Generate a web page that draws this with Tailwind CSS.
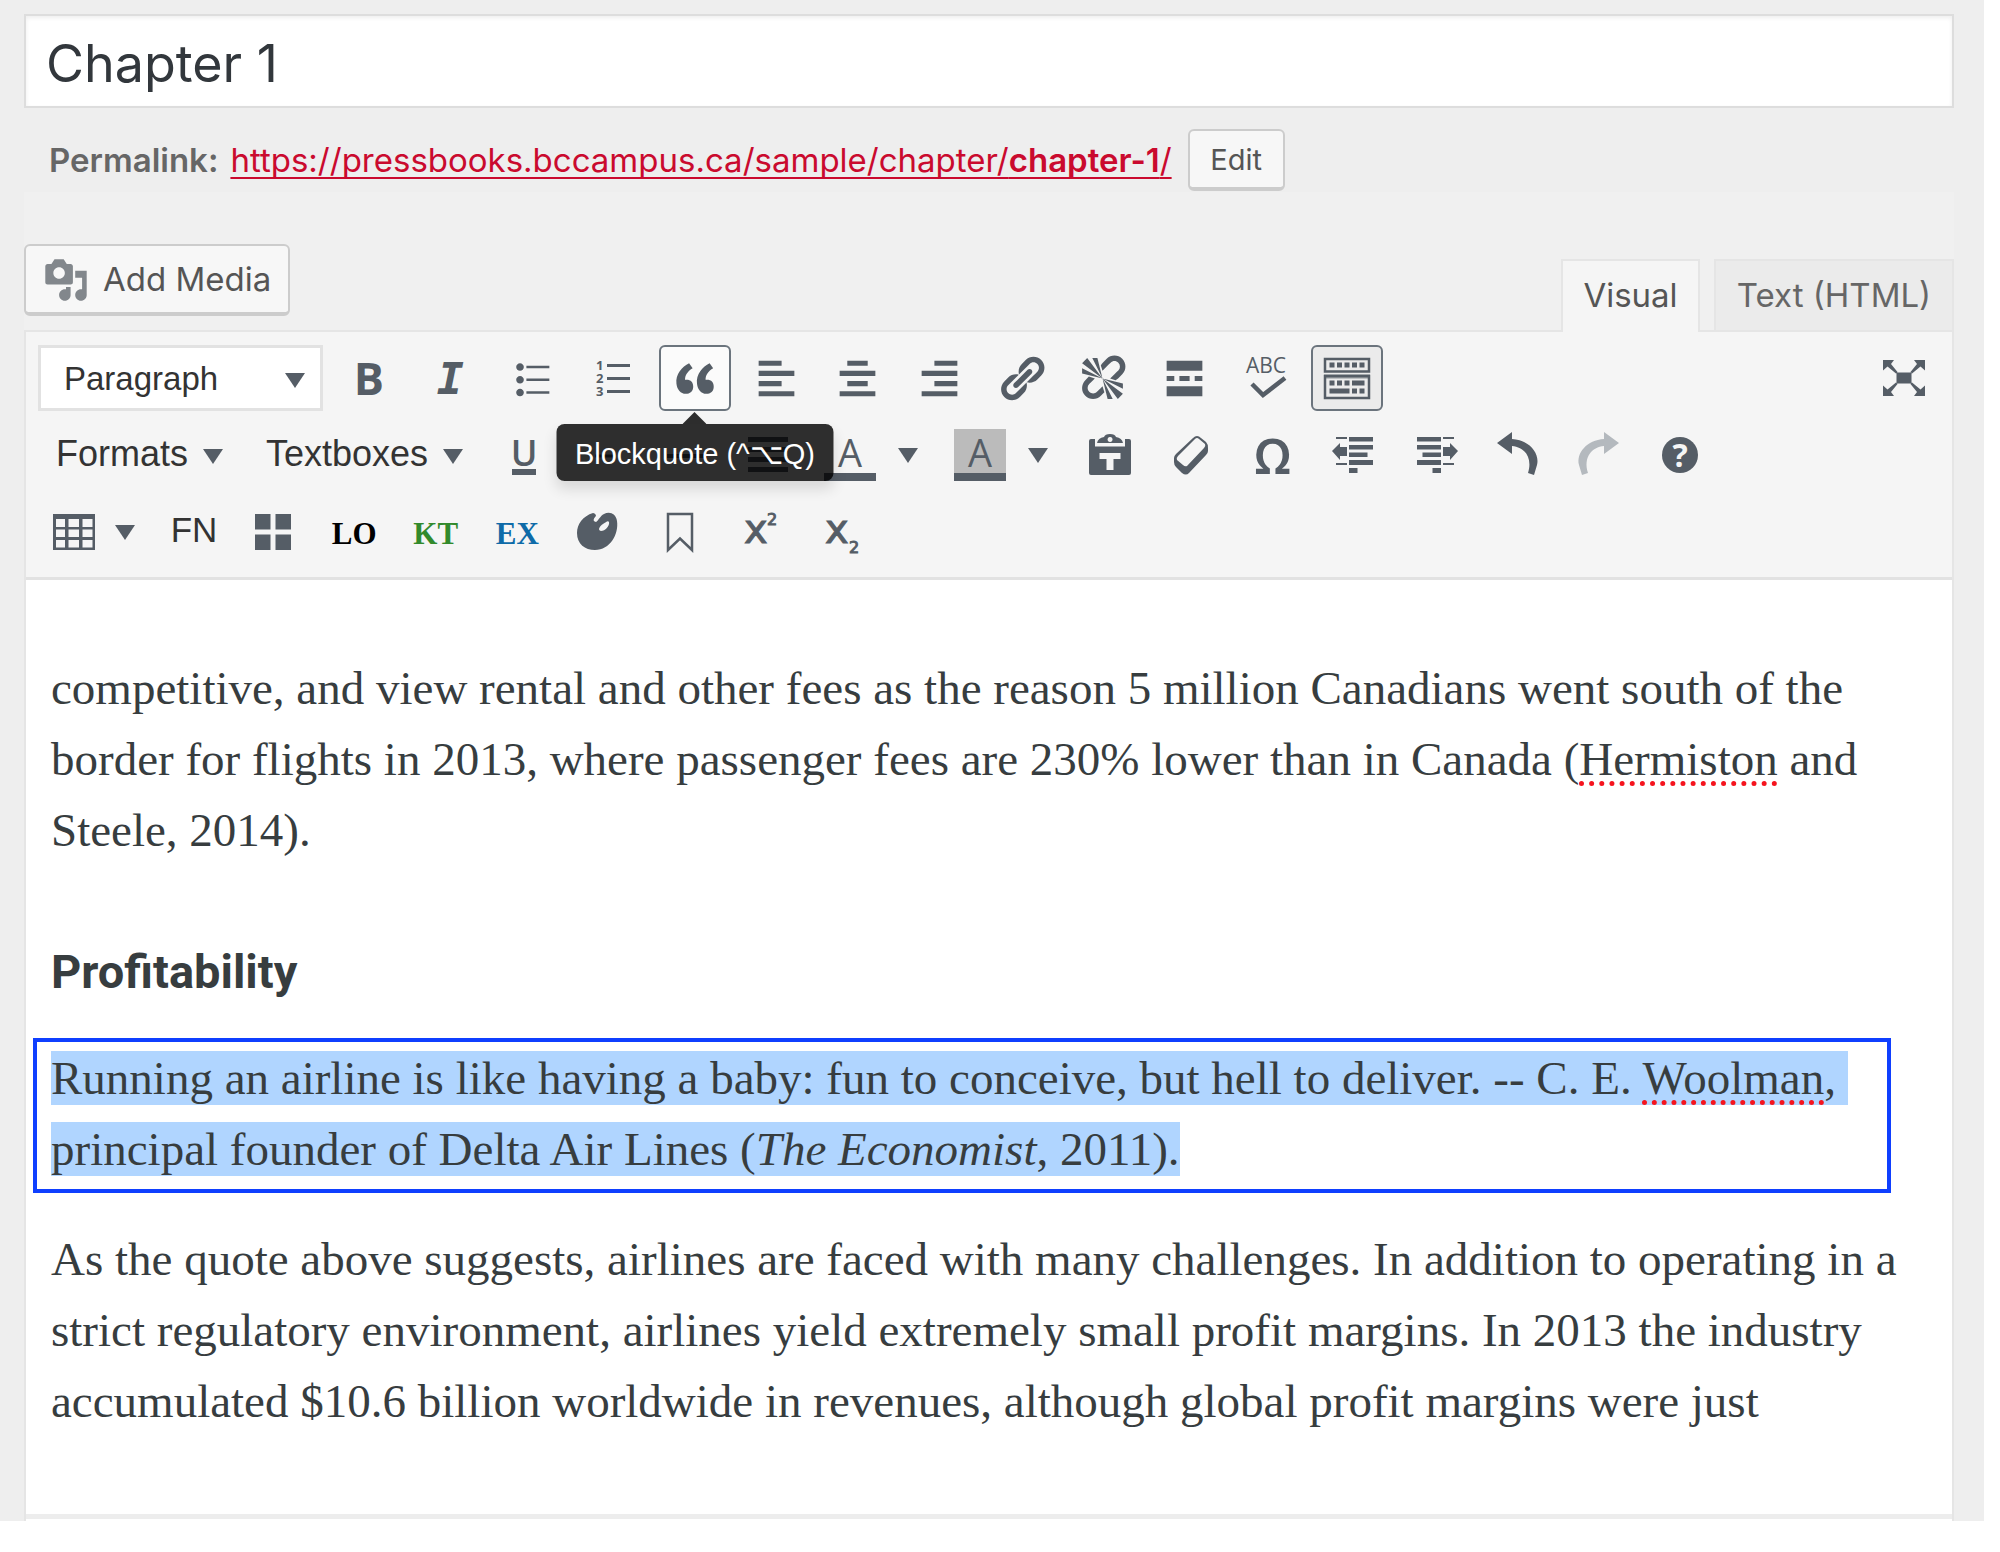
<!DOCTYPE html>
<html lang="en">
<head>
<meta charset="utf-8">
<title>Edit Chapter</title>
<script src="https://cdn.jsdelivr.net/npm/@tailwindcss/browser@4"></script>
</head>
<body class="bg-white font-['Inter',sans-serif] text-[#555]">
<main class="mr-4 bg-[#eeeeee] pt-[14px] pr-[30px] pl-6">

  <input type="text" aria-label="Title" value="Chapter 1" class="block h-[94px] w-full border-2 border-[#dddddd] bg-white px-5 pt-1 text-[52px] text-[#32373c] shadow-[inset_0_2px_4px_rgba(0,0,0,0.07)]">

  <div class="flex h-[84px] items-start pt-[21px] pl-[25px] text-[33px] leading-[62px]">
    <strong class="mr-3 font-semibold text-[#666]">Permalink:</strong>
    <a href="#" class="mr-4 text-[#ca0a2e] underline decoration-2 underline-offset-[5px] [text-decoration-skip-ink:none]">https://pressbooks.bccampus.ca/sample/chapter/<b class="font-semibold">chapter-1</b>/</a>
    <button class="h-[62px] w-[97px] rounded-md border-2 border-b-4 border-[#cccccc] bg-[#f7f7f7] pt-px text-[29px] leading-[56px]">Edit</button>
  </div>

  <section class="bg-[#f0f0f0] pt-[52px]">
    <div class="flex h-[86px] items-start justify-between">
      <button class="flex h-[72px] items-center gap-[14px] rounded-md border-2 border-b-4 border-[#cccccc] bg-[#f7f7f7] pt-[2px] pr-[17px] pl-[17px] text-[33px]">
        <svg viewBox="0 0 20 20" class="size-[46px] fill-[#82878c]"><path d="M13 11V4c0-.55-.45-1-1-1h-1.67L9 1H5L3.67 3H2c-.55 0-1 .45-1 1v7c0 .55.45 1 1 1h10c.55 0 1-.45 1-1zM7 4.5c1.38 0 2.5 1.12 2.5 2.5S8.38 9.5 7 9.5 4.5 8.38 4.5 7 5.62 4.5 7 4.5zM14 6h5v10.5c0 1.38-1.12 2.5-2.5 2.5S14 17.88 14 16.5s1.12-2.5 2.5-2.5c.17 0 .34.02.5.05V9h-3V6zm-4 8.05V13h2v3.5c0 1.38-1.12 2.5-2.5 2.5S7 17.88 7 16.5 8.12 14 9.5 14c.17 0 .34.02.5.05z"/></svg>
        Add Media
      </button>
      <div class="flex gap-[14px] self-end text-[33px]">
        <button class="-mb-[2px] h-[73px] w-[139px] border-2 border-b-0 border-[#e5e5e5] bg-[#f5f5f5] pb-[2px]">Visual</button>
        <button class="h-[71px] w-[240px] border-2 border-b-0 border-[#e5e5e5] bg-[#ebebeb] text-[#666]">Text (HTML)</button>
      </div>
    </div>

    <div class="border-2 border-b-0 border-[#e5e5e5] bg-white">
      <!-- Toolbar -->
      <div class="flex flex-col gap-[11px] border-b-3 border-[#e2e2e2] bg-[#f5f5f5] pt-[13px] pb-[12px] font-['Liberation_Sans',sans-serif] text-[#555d66]">

        <div class="flex h-[66px] items-center pr-3">
          <div class="relative mr-[5px] ml-3 h-full w-[285px]">
            <select aria-label="Paragraph format" class="h-full w-full appearance-none border-3 border-[#e2e2e2] bg-white pt-[2px] pl-[23px] text-[33px] text-[#333]"><option>Paragraph</option></select>
            <svg viewBox="0 0 20 15" class="pointer-events-none absolute top-[28px] right-[18px] h-[15px] w-[20px] fill-[#555d66]"><path d="M0 0h20L10 15z"/></svg>
          </div>
          <div class="grid w-[1060px] grid-cols-13 justify-items-center">
            <button aria-label="Bold" class="h-[66px] w-[72px] font-['Open_Sans',sans-serif] text-[45px] leading-[66px] font-bold">B</button>
            <button aria-label="Italic" class="h-[66px] w-[72px] font-['DejaVu_Sans_Mono',monospace] text-[45px] leading-[68px] font-bold italic">I</button>
            <button aria-label="Bulleted list" class="flex h-[66px] w-[72px] items-center justify-center"><svg viewBox="0 0 20 20" class="size-[51px] fill-current"><path d="M5.5 7C4.67 7 4 6.33 4 5.5 4 4.68 4.67 4 5.5 4 6.32 4 7 4.68 7 5.5 7 6.33 6.32 7 5.5 7zM8 5h9v1H8V5zm-2.5 7c-.83 0-1.5-.67-1.5-1.5C4 9.68 4.67 9 5.5 9c.82 0 1.5.68 1.5 1.5 0 .83-.68 1.5-1.5 1.5zM8 10h9v1H8v-1zm-2.5 7c-.83 0-1.5-.67-1.5-1.5 0-.82.67-1.5 1.5-1.5.82 0 1.5.68 1.5 1.5 0 .83-.68 1.5-1.5 1.5zM8 15h9v1H8v-1z"/></svg></button>
            <button aria-label="Numbered list" class="flex h-[66px] w-[72px] items-center justify-center"><svg viewBox="-26 -26 52 52" class="size-[52px] fill-current font-['Open_Sans',sans-serif] text-[13px] font-bold"><path d="M-6 -14h23v3h-23zM-6 -1h23v3h-23zM-6 12h23v3h-23z"/><text x="-17" y="-8">1</text><text x="-17" y="5">2</text><text x="-17" y="18">3</text></svg></button>
            <div class="relative">
              <button aria-label="Blockquote" aria-describedby="tip" class="flex h-[66px] w-[72px] items-center justify-center rounded-md border-2 border-[#6b747d] bg-[#fbfbfb]"><svg viewBox="0 0 20 20" class="size-[51px] fill-current"><path d="M9.49 13.22c0-.74-.2-1.38-.61-1.9-.62-.78-1.83-.88-2.53-.72-.29-1.65 1.11-3.75 2.92-4.65L7.88 4c-2.73 1.3-5.42 4.28-4.96 8.05C3.21 14.43 4.59 16 6.54 16c.85 0 1.56-.25 2.12-.75s.83-1.18.83-2.03zm8.05 0c0-.74-.2-1.38-.61-1.9-.63-.78-1.83-.88-2.53-.72-.29-1.65 1.11-3.75 2.92-4.65L15.93 4c-2.73 1.3-5.41 4.28-4.95 8.05.29 2.38 1.66 3.95 3.61 3.95.85 0 1.56-.25 2.12-.75s.83-1.18.83-2.03z"/></svg></button>
              <div class="absolute top-[67px] left-1/2 z-10 flex -translate-x-1/2 flex-col items-center">
                <svg viewBox="0 0 24 12" class="h-3 w-6 fill-black/81"><path d="M0 12L12 0l12 12z"/></svg>
                <span id="tip" role="tooltip" class="h-[57px] w-[277px] rounded-lg bg-black/81 text-center text-[29px] leading-[60px] whitespace-nowrap text-white shadow-[0_8px_14px_rgba(0,0,0,0.12)]">Blockquote (^⌥Q)</span>
              </div>
            </div>
            <button aria-label="Align left" class="flex h-[66px] w-[72px] items-center justify-center"><svg viewBox="0 0 20 20" class="size-[51px] fill-current"><path d="M12 5V3H3v2h9zm5 4V7H3v2h14zm-5 4v-2H3v2h9zm5 4v-2H3v2h14z"/></svg></button>
            <button aria-label="Align center" class="flex h-[66px] w-[72px] items-center justify-center"><svg viewBox="0 0 20 20" class="size-[51px] fill-current"><path d="M14 5V3H6v2h8zm3 4V7H3v2h14zm-3 4v-2H6v2h8zm3 4v-2H3v2h14z"/></svg></button>
            <button aria-label="Align right" class="flex h-[66px] w-[72px] items-center justify-center"><svg viewBox="0 0 20 20" class="size-[51px] fill-current"><path d="M17 5V3H8v2h9zm0 4V7H3v2h14zm0 4v-2H8v2h9zm0 4v-2H3v2h14z"/></svg></button>
            <button aria-label="Insert link" class="flex h-[66px] w-[72px] items-center justify-center"><svg viewBox="0 0 20 20" class="size-[51px] fill-current"><path d="M17.74 2.76c1.68 1.69 1.68 4.41 0 6.1l-1.53 1.52c-1.12 1.12-2.7 1.47-4.14 1.09l2.62-2.61.76-.77.76-.76c.84-.84.84-2.2 0-3.04-.84-.85-2.2-.85-3.04 0l-.77.76-3.38 3.38c-.37-1.44-.02-3.02 1.1-4.14l1.52-1.53c1.69-1.68 4.42-1.68 6.1 0zM8.59 13.43l5.34-5.34c.42-.42.42-1.1 0-1.52-.44-.43-1.13-.39-1.53 0l-5.33 5.34c-.42.42-.42 1.1 0 1.52.44.43 1.13.39 1.52 0zm-.76 2.29l4.14-4.15c.38 1.44.03 3.02-1.09 4.14l-1.52 1.53c-1.69 1.68-4.41 1.68-6.1 0-1.68-1.68-1.68-4.42 0-6.1l1.53-1.52c1.12-1.12 2.7-1.47 4.14-1.1l-4.14 4.15c-.85.84-.85 2.2 0 3.05.84.84 2.2.84 3.04 0z"/></svg></button>
            <button aria-label="Remove link" class="flex h-[66px] w-[72px] items-center justify-center"><svg viewBox="0 0 20 20" class="size-[51px] fill-current"><path d="M17.74 2.26c1.68 1.69 1.68 4.41 0 6.1l-1.53 1.52c-.32.33-.69.58-1.08.77L13 10l1.69-1.64.76-.77.76-.76c.84-.84.84-2.2 0-3.04-.84-.85-2.2-.85-3.04 0l-.77.76-.76.76L10 7l-.65-2.14c.19-.38.44-.75.77-1.07l1.52-1.53c1.69-1.68 4.42-1.68 6.1 0zM2 4l8 6-6-8zm4-2l4 8-2-8H6zM2 6l8 4-8-2V6zm7.36 7.69L10 13l.74 2.35-1.38 1.39c-1.69 1.68-4.41 1.68-6.1 0-1.68-1.68-1.68-4.42 0-6.1l1.39-1.38L7 10l-.69.64-1.52 1.53c-.85.84-.85 2.2 0 3.04.84.85 2.2.85 3.04 0zM18 16l-8-6 6 8zm-4 2l-4-8 2 8h2zm4-4l-8-4 8 2v2z"/></svg></button>
            <button aria-label="Insert Read More tag" class="flex h-[66px] w-[72px] items-center justify-center"><svg viewBox="0 0 20 20" class="size-[51px] fill-current"><path d="M17 7V3H3v4h14zM6 11V9H3v2h3zm6 0V9H8v2h4zm5 0V9h-3v2h3zm0 6v-4H3v4h14z"/></svg></button>
            <button aria-label="Proofread" class="flex h-[66px] w-[72px] items-center justify-center"><svg viewBox="-26 -26 52 52" class="size-[52px] fill-current font-['Open_Sans',sans-serif] text-[21px] font-medium"><text x="0" y="-5" text-anchor="middle">ABC</text><path d="M-14 6L-3 17L19 0" fill="none" stroke="currentColor" stroke-width="4.5"/></svg></button>
            <button aria-label="Toolbar toggle" class="flex h-[66px] w-[72px] items-center justify-center rounded-md border-2 border-[#6b747d] bg-[#ebebeb]"><svg viewBox="-26 -26 52 52" class="size-[52px] fill-current"><path d="M-22 -19h44v12.500h-44zM-22 -2h44v22h-44z" fill="none" stroke="currentColor" stroke-width="2.500"/><path d="M-23 -3.500h46v4h-46z" opacity=".6"/><path d="M-17.500-15.500h5v5h-5zM-10-15.500h5v5h-5zM-2.500-15.500h5v5h-5zM5-15.500h5v5h-5zM12.500-15.500h5v5h-5zM-17.500 2.500h5v5h-5zM-10 2.500h5v5h-5zM-2.500 2.500h5v5h-5zM5 2.500h12.500v5h-12.500zM-17.500 10.500h20v5h-20zM5 10.500h5v5h-5zM12.500 10.500h5v5h-5z"/></svg></button>
          </div>
          <button aria-label="Distraction-free writing mode" class="ml-auto flex h-[66px] w-[72px] items-center justify-center"><svg viewBox="-26 -26 52 52" class="size-[52px] fill-current"><path d="M-7.500-5.500h15v11h-15zM-21-18h11l-3 4 6.500 8-1.500 1.500-8.500-7-4.500 4zM21-18h-11l3 4-6.500 8 1.500 1.500 8.500-7 4.500 4zM-21 18h11l-3-4 6.500-8-1.500-1.500-8.500 7-4.500-4zM21 18h-11l3-4-6.500-8 1.500-1.500 8.500 7 4.500-4z"/></svg></button>
        </div>

        <div class="flex h-[66px] items-center">
          <div class="flex w-[457px] gap-[43px] pb-[2px] pl-[30px] text-[36px] text-[#333]">
            <button class="flex items-center gap-[15px]">Formats <svg viewBox="0 0 20 15" class="mt-1 h-[15px] w-[20px] fill-[#555d66]"><path d="M0 0h20L10 15z"/></svg></button>
            <button class="flex items-center gap-[15px]">Textboxes <svg viewBox="0 0 20 15" class="mt-1 h-[15px] w-[20px] fill-[#555d66]"><path d="M0 0h20L10 15z"/></svg></button>
          </div>
          <div class="grid w-[326px] grid-cols-4 justify-items-center">
            <button aria-label="Underline" class="flex h-[66px] w-[72px] items-center justify-center"><svg viewBox="-26 -26 52 52" class="size-[52px] fill-current font-['Open_Sans',sans-serif] text-[36px] font-semibold"><text x="0" y="11" text-anchor="middle">U</text><path d="M-12 14h24v6h-24z"/></svg></button>
            <button aria-label="Strikethrough" class="flex h-[66px] w-[72px] items-center justify-center"><svg viewBox="-26 -26 52 52" class="size-[52px]"><path d="M-10 1h20" fill="none" stroke="currentColor" stroke-width="3"/></svg></button>
            <button aria-label="Horizontal line" class="flex h-[66px] w-[72px] items-center justify-center"><svg viewBox="-26 -26 52 52" class="size-[52px] fill-current"><path d="M-20-1h40v4h-40z"/></svg></button>
            <button aria-label="Justify" class="flex h-[66px] w-[72px] items-center justify-center"><svg viewBox="-26 -26 52 52" class="size-[52px] fill-current"><path d="M-20-18h40v5h-40zM-20-8h40v5h-40zM-20 2h40v5h-40zM-20 12h40v5h-40z"/></svg></button>
          </div>
          <div class="flex w-[130px] items-center gap-[22px] pl-[15px]">
            <button aria-label="Text color" class="h-[52px] w-[52px] border-b-8 border-[#555d66] font-['Open_Sans',sans-serif] text-[38px] leading-[46px] font-medium">A</button>
            <button aria-label="Text color options"><svg viewBox="0 0 20 15" class="h-[15px] w-[20px] fill-current"><path d="M0 0h20L10 15z"/></svg></button>
          </div>
          <div class="flex w-[130px] items-center gap-[22px] pl-[15px]">
            <button aria-label="Background color" class="h-[52px] w-[52px] border-b-8 border-[#555d66] bg-[#bbbbbb] font-['Open_Sans',sans-serif] text-[38px] leading-[46px] font-medium">A</button>
            <button aria-label="Background color options"><svg viewBox="0 0 20 15" class="h-[15px] w-[20px] fill-current"><path d="M0 0h20L10 15z"/></svg></button>
          </div>
          <div class="grid w-[652px] grid-cols-8 justify-items-center">
            <button aria-label="Paste as text" class="flex h-[66px] w-[72px] items-center justify-center"><svg viewBox="-26 -26 52 52" class="size-[52px] fill-current"><path fill-rule="evenodd" d="M-19-16h4v7.500h30v-7.500h4q2 0 2 2v32q0 2-2 2h-38q-2 0-2-2v-32q0-2 2-2zM-10.500-2v6h7v11h7v-11h7v-6z"/><path fill-rule="evenodd" d="M-13-12q1-5 7-6 1-3 6-3t6 3q6 1 7 6zM0-18a2.500 2.500 0 1 0 .1 0z"/></svg></button>
            <button aria-label="Clear formatting" class="flex h-[66px] w-[72px] items-center justify-center"><svg viewBox="-26 -26 52 52" class="size-[52px] fill-current"><path d="M2-17Q6-21 10-17L15-13Q17-11 17-7V-4Q17-2 15 0L-2 18Q-5 21-9 18L-15 12Q-17 10-17 7V3Q-17 1-15-1Z"/><path class="fill-[#f5f5f5]" d="M4-16Q6-18 8-16L14-11Q15-9 13-7L-4 11Q-6 12-8 10L-14 5Q-15 3-13 1Z"/></svg></button>
            <button aria-label="Special character" class="h-[66px] w-[72px] font-['Noto_Sans',sans-serif] text-[49px] leading-[64px] font-semibold">Ω</button>
            <button aria-label="Decrease indent" class="flex h-[66px] w-[72px] items-center justify-center"><svg viewBox="-26 -26 52 52" class="size-[52px] fill-current"><path d="M-5-18h24v4.500h-24zM-5-10h24v4.500h-24zM-5-2.500h18.500v4.500h-18.500zM-5 5h24v5h-24zM-5 13h8.500v5h-8.500zM-18-18h11v2h-11zM-18 8h11v2h-11zM-22-4l8-8v4h7v9h-7v4z"/></svg></button>
            <button aria-label="Increase indent" class="flex h-[66px] w-[72px] items-center justify-center"><svg viewBox="-26 -26 52 52" class="size-[52px] fill-current"><path transform="scale(-1 1)" d="M-5-18h24v4.500h-24zM-5-10h24v4.500h-24zM-5-2.500h18.500v4.500h-18.500zM-5 5h24v5h-24zM-5 13h8.500v5h-8.500zM-18-18h11v2h-11zM-18 8h11v2h-11zM-22-4l8-8v4h7v9h-7v4z"/></svg></button>
            <button aria-label="Undo" class="flex h-[66px] w-[72px] items-center justify-center"><svg viewBox="-26 -26 52 52" class="size-[52px] fill-current"><path d="M-20-12L-5-23V-16C12-15 23-2 20 10L17 20L11 18C16 2 7-8-5-9V-1Z"/></svg></button>
            <button aria-label="Redo" disabled class="flex h-[66px] w-[72px] items-center justify-center text-[#b4b9be]"><svg viewBox="-26 -26 52 52" class="size-[52px] fill-current"><path transform="scale(-1 1)" d="M-20-12L-5-23V-16C12-15 23-2 20 10L17 20L11 18C16 2 7-8-5-9V-1Z"/></svg></button>
            <button aria-label="Keyboard shortcuts" class="flex h-[66px] w-[72px] items-center justify-center"><svg viewBox="-26 -26 52 52" class="size-[52px] fill-current font-['Open_Sans',sans-serif] text-[32px] font-bold"><circle r="18"/><text x="0" y="12" text-anchor="middle" class="fill-[#f5f5f5]">?</text></svg></button>
          </div>
        </div>

        <div class="flex h-[66px] items-center">
          <div class="flex w-[126px] items-center gap-[20px] pl-[27px]">
            <button aria-label="Table"><svg viewBox="0 0 42 36" class="h-[36px] w-[42px] fill-current"><path fill-rule="evenodd" d="M0 0h42v36h-42zM3 5v8h9v-8zM15.500 5v8h10.500v-8zM29.500 5v8h10v-8zM3 15.500v7.500h9v-7.500zM15.500 15.500v7.500h10.500v-7.500zM29.500 15.500v7.500h10v-7.500zM3 26v7.500h9v-7.500zM15.500 26v7.500h10.500v-7.500zM29.500 26v7.500h10v-7.500z"/></svg></button>
            <button aria-label="Table options"><svg viewBox="0 0 20 15" class="h-[15px] w-[20px] fill-current"><path d="M0 0h20L10 15z"/></svg></button>
          </div>
          <button aria-label="Insert footnote" class="h-[66px] w-[80px] pb-1 pl-1 text-[35px] text-[#333]">FN</button>
          <div class="grid w-[652px] grid-cols-8 justify-items-center">
            <button aria-label="Glossary grid" class="flex h-[66px] w-[72px] items-center justify-center"><svg viewBox="0 0 36 36" class="size-[36px] fill-current"><path d="M0 0h15.500v15.500h-15.500zM20.500 0h15.500v15.500h-15.500zM0 20.500h15.500v15.500h-15.500zM20.500 20.500h15.500v15.500h-15.500z"/></svg></button>
            <button aria-label="Learning objectives" class="h-[66px] w-[72px] pt-1 font-['Liberation_Serif',serif] text-[31px] font-bold text-black">LO</button>
            <button aria-label="Key takeaways" class="h-[66px] w-[72px] pt-1 font-['Liberation_Serif',serif] text-[31px] font-bold text-[#328a2c]">KT</button>
            <button aria-label="Exercises" class="h-[66px] w-[72px] pt-1 font-['Liberation_Serif',serif] text-[31px] font-bold text-[#0e6ba8]">EX</button>
            <button aria-label="Apply class" class="flex h-[66px] w-[72px] items-center justify-center"><svg viewBox="-26 -26 52 52" class="size-[52px] fill-current"><path fill-rule="evenodd" d="M-6-19C-16-16-22-8-22 1-22 12-14 18-4 18 11 18 20 2 18-11 17-19 10-21 5-18 1-16 0-12-3-10-7-11-5-14-3-16-3-18-5-19-6-19ZM10-10C11-6 6-1 2-1-2-2 1-6 4-8 7-10 9-12 10-10Z"/></svg></button>
            <button aria-label="Anchor" class="flex h-[66px] w-[72px] items-center justify-center"><svg viewBox="-26 -26 52 52" class="size-[52px]"><path d="M-12-18h24v36l-12-11.500-12 11.500z" fill="none" stroke="currentColor" stroke-width="2.500"/></svg></button>
            <button aria-label="Superscript" class="flex h-[66px] w-[72px] items-center justify-center"><svg viewBox="-26 -26 52 52" class="size-[52px] overflow-visible fill-current stroke-current font-['DejaVu_Sans',sans-serif]"><text x="-18" y="11" class="text-[40px]">x</text><text x="5" y="-7" class="text-[16px]">2</text></svg></button>
            <button aria-label="Subscript" class="flex h-[66px] w-[72px] items-center justify-center"><svg viewBox="-26 -26 52 52" class="size-[52px] overflow-visible fill-current stroke-current font-['DejaVu_Sans',sans-serif]"><text x="-18" y="11" class="text-[40px]">x</text><text x="6" y="21" class="text-[16px]">2</text></svg></button>
          </div>
        </div>
      </div>

      <!-- Chapter text -->
      <article class="px-[7px] pt-[73px] pb-[77px] font-['Liberation_Serif',serif] text-[47px] leading-[71px] text-[#373d3f]">
        <p class="px-[18px]">competitive, and view rental and other fees as the reason 5 million Canadians went south of the border for flights in 2013, where passenger fees are 230% lower than in Canada (<span class="underline decoration-[#f5141e] decoration-dotted decoration-[5px] underline-offset-[6px] [text-decoration-skip-ink:none]">Hermiston</span> and Steele, 2014).</p>
        <h3 class="mt-[76px] px-[18px] font-['Roboto',sans-serif] text-[47px] leading-[60px] font-bold">Profitability</h3>
        <blockquote class="mt-[36px] mr-[54px] border-4 border-[#0f3fff] pt-px pb-1 pl-[14px]">
          <p><span class="bg-[#b0d5ff] py-px">Running an airline is like having a baby: fun to conceive, but hell to deliver. -- C. E. <span class="underline decoration-[#f5141e] decoration-dotted decoration-[5px] underline-offset-[6px] [text-decoration-skip-ink:none]">Woolman</span>,&nbsp;<wbr>principal founder of Delta Air Lines (<em>The Economist</em>, 2011).</span></p>
        </blockquote>
        <p class="mt-[31px] px-[18px]">As the quote above suggests, airlines are faced with many challenges. In addition to operating in a strict regulatory environment, airlines yield extremely small profit margins. In 2013 the industry accumulated $10.6 billion worldwide in revenues, although global profit margins were just</p>
      </article>
      <div class="h-[7px] border-t-5 border-[#ededed] bg-white"></div>
    </div>
  </section>
</main>
</body>
</html>
